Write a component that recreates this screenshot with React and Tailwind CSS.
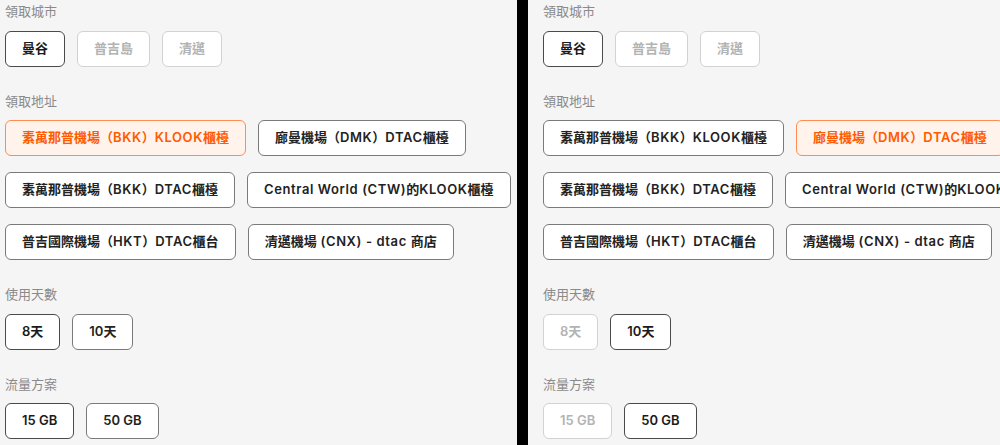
import React from "react";

const FONT = "font-['Inter','Noto_Sans_CJK_TC',sans-serif]";

function Wide({ text }) {
  const parts = text.split(/([A-Za-z0-9 ()\-]+)/).filter((p) => p.length > 0);
  return (
    <span>
      {parts.map((p, i) =>
        /[A-Za-z0-9]/.test(p) ? (
          <span key={i} className="tracking-[0.6px]">
            {p}
          </span>
        ) : (
          <span key={i}>{p}</span>
        )
      )}
    </span>
  );
}

function Btn({ children, v = "normal", wide }) {
  const styles = {
    normal: "border-[#7a7a7a] bg-white text-[#222]",
    selected: "border-[#4a4a4a] bg-white text-[#1a1a1a]",
    disabled: "border-[#d2d2d2] bg-white text-[#b3b3b3]",
    orange: "border-[#ff8d50] bg-[#fff3eb] text-[#ff5b00]",
  };
  return (
    <div
      className={
        "h-[36px] px-[16px] rounded-[6px] border flex items-center justify-center whitespace-pre text-[13px] font-semibold " +
        styles[v]
      }
    >
      {wide ? <Wide text={children} /> : children}
    </div>
  );
}

function Label({ children }) {
  return <div className="text-[13px] leading-[20px] text-[#8a8a8a]">{children}</div>;
}

function Panel({ right }) {
  return (
    <div className={"w-[512px] pt-[1px] flex flex-col " + FONT}>
      <Label>領取城市</Label>
      <div className="mt-[10px] flex gap-3">
        <Btn v="selected">曼谷</Btn>
        <Btn v="disabled">普吉島</Btn>
        <Btn v="disabled">清邁</Btn>
      </div>
      <div className="mt-[24px]">
        <Label>領取地址</Label>
      </div>
      <div className="mt-[9px] flex flex-wrap gap-x-3 gap-y-4">
        <Btn wide v={right ? "normal" : "orange"}>素萬那普機場（BKK）KLOOK櫃檯</Btn>
        <Btn wide v={right ? "orange" : "normal"}>廊曼機場（DMK）DTAC櫃檯</Btn>
        <Btn wide>素萬那普機場（BKK）DTAC櫃檯</Btn>
        <Btn wide>Central World (CTW)的KLOOK櫃檯</Btn>
        <Btn wide>普吉國際機場（HKT）DTAC櫃台</Btn>
        <Btn wide>清邁機場 (CNX) - dtac 商店</Btn>
      </div>
      <div className="mt-[24px]">
        <Label>使用天數</Label>
      </div>
      <div className="mt-[10px] flex gap-3">
        <Btn v={right ? "disabled" : "selected"}>8天</Btn>
        <Btn v={right ? "selected" : "normal"}>10天</Btn>
      </div>
      <div className="mt-[24px]">
        <Label>流量方案</Label>
      </div>
      <div className="mt-[9px] flex gap-3">
        <Btn v={right ? "disabled" : "selected"}>15 GB</Btn>
        <Btn v={right ? "selected" : "normal"}>50 GB</Btn>
      </div>
    </div>
  );
}

export default function App() {
  return (
    <div className="flex w-[1000px] h-[445px] overflow-hidden bg-[#f5f5f5]">
      <div className="w-[517px] shrink-0 pl-[5px] overflow-hidden">
        <Panel />
      </div>
      <div className="w-[11px] shrink-0 bg-black" />
      <div className="flex-1 min-w-0 pl-[15px] overflow-hidden">
        <Panel right />
      </div>
    </div>
  );
}
